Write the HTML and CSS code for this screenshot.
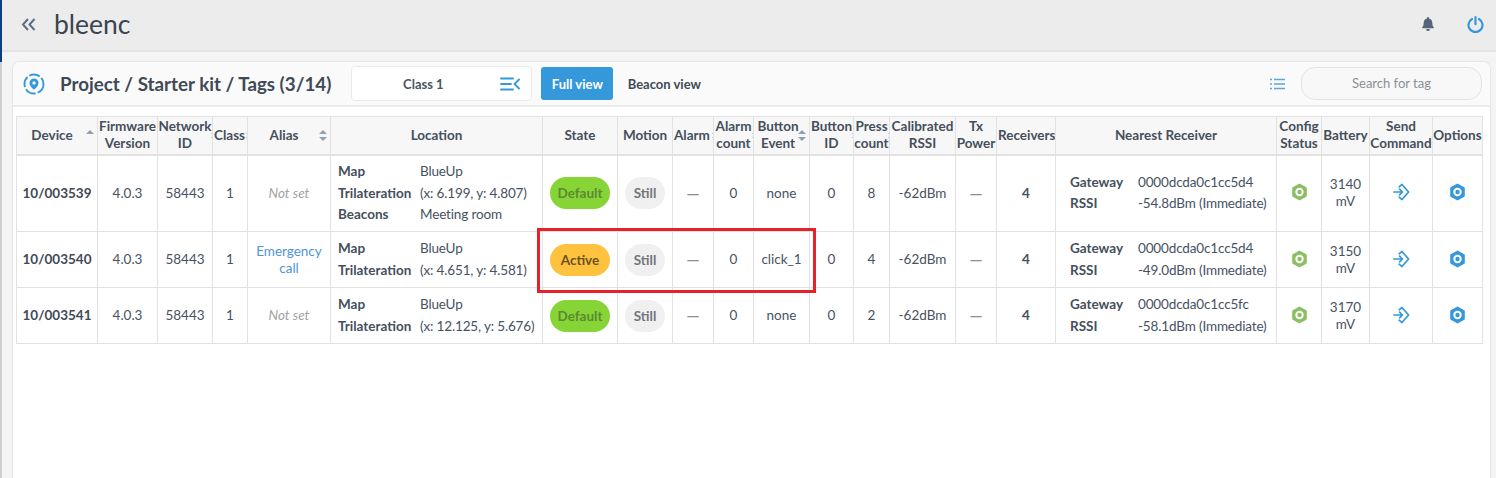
FILE: index.html
```html
<!DOCTYPE html>
<html lang="en">
<head>
<meta charset="utf-8">
<title>bleenc</title>
<link rel="stylesheet" href="styles.css">
</head>
<body>
<svg class="defs" width="0" height="0" aria-hidden="true">
  <symbol id="hex" viewBox="0 0 16 18"><path fill-rule="evenodd" d="M8 .4 14.800 4.300a1 1 0 0 1 .5.9v7.600a1 1 0 0 1-.5.9L8 17.600 1.200 13.700a1 1 0 0 1-.5-.9V5.200a1 1 0 0 1 .5-.9ZM8 4.800a4.200 4.200 0 1 0 0 8.400 4.200 4.200 0 0 0 0-8.400Z"/><circle cx="8" cy="9" r="2.200"/></symbol>
  <symbol id="send" viewBox="0 0 18 18"><path fill="none" stroke="currentColor" stroke-width="1.800" stroke-linecap="round" stroke-linejoin="round" d="M1 9h9M7 6l3 3-3 3M6.500 3.500 9.500 1l7 8-7 8-3-2.500"/></symbol>
</svg>
<div class="rail"><div class="rail-top"></div><div class="rail-bottom"></div></div>
<div class="page">
  <header class="topbar">
    <svg class="collapse" width="15" height="13" viewBox="0 0 15 13"><path fill="none" stroke="#5f6f82" stroke-width="2" d="M7 1 2 6.500 7 12M13.500 1l-5 5.500 5 5.500"/></svg>
    <span class="brand">bleenc</span>
    <span class="spacer"></span>
    <svg class="bell" width="12" height="14" viewBox="0 0 12 14"><path fill="#56657a" d="M6 0a1 1 0 0 1 1 1v.6c2 .4 3.300 2.100 3.300 4.100 0 2.700.7 3.700 1.400 4.500.3.400.1 1-.5 1H.8c-.6 0-.8-.6-.5-1C1 9.400 1.700 8.400 1.700 5.700c0-2 1.300-3.700 3.300-4.100V1a1 1 0 0 1 1-1ZM4.400 12h3.200A1.600 1.600 0 0 1 6 14a1.600 1.600 0 0 1-1.600-2Z"/></svg>
    <svg class="power" width="17" height="17" viewBox="0 0 17 17"><path fill="none" stroke="#3498db" stroke-width="2.200" stroke-linecap="round" d="M5 3a7 7 0 1 0 7 0M8.500 1.200v7"/></svg>
  </header>
  <main class="card">
    <div class="card-head">
      <svg class="pin" width="22" height="22" viewBox="0 0 22 22"><circle cx="11" cy="11" r="9.500" fill="none" stroke="#3498db" stroke-width="1.900" stroke-dasharray="11 2.200"/><path fill="#3498db" fill-rule="evenodd" d="M11 5.500a4.500 4.500 0 0 1 4.500 4.500c0 2.800-3 5.500-4.500 6.800C9.500 15.500 6.500 12.800 6.500 10A4.500 4.500 0 0 1 11 5.500Zm0 2.800a1.700 1.700 0 1 0 0 3.400 1.700 1.700 0 0 0 0-3.400Z"/></svg>
      <h1 class="title">Project / Starter kit / Tags (3/14)</h1>
      <div class="select">
        <span class="select-label">Class 1</span>
        <svg width="20" height="14" viewBox="0 0 20 14"><path fill="none" stroke="#3498db" stroke-width="1.800" stroke-linecap="round" d="M1 1.500h12M1 7h10M1 12.500h12M19 2.500 14.500 7l4.500 4.500"/></svg>
      </div>
      <button class="btn btn-primary">Full view</button>
      <button class="btn btn-plain">Beacon view</button>
      <span class="spacer"></span>
      <svg class="list" width="15" height="12" viewBox="0 0 15 12"><path fill="none" stroke="#5aa5da" stroke-width="1.600" d="M4 1.500h11M4 6h11M4 10.500h11M0 1.500h2M0 6h2M0 10.500h2"/></svg>
      <div class="search">Search for tag</div>
    </div>
    <div class="table-wrap">
      <table class="tags">
        <thead>
          <tr>
            <th class="pad-l">Device<i class="sort up"></i></th>
            <th>Firmware<br>Version</th>
            <th>Network<br>ID<i class="sort clip"></i></th>
            <th class="left">Class<i class="sort clip"></i></th>
            <th class="pad-l">Alias<i class="sort"></i></th>
            <th>Location</th>
            <th>State</th>
            <th>Motion</th>
            <th class="left">Alarm<i class="sort clip"></i></th>
            <th>Alarm<br>count<i class="sort clip"></i></th>
            <th class="pad-s">Button<br>Event<i class="sort"></i></th>
            <th>Button<br>ID<i class="sort clip"></i></th>
            <th>Press<br>count<i class="sort clip"></i></th>
            <th>Calibrated<br>RSSI</th>
            <th>Tx<br>Power</th>
            <th class="left">Receivers<i class="sort clip"></i></th>
            <th>Nearest Receiver</th>
            <th>Config<br>Status</th>
            <th>Battery</th>
            <th>Send<br>Command</th>
            <th>Options</th>
          </tr>
        </thead>
        <tbody>
          <tr class="r1">
            <td class="strong">10/003539</td><td>4.0.3</td><td>58443</td><td>1</td>
            <td class="muted">Not set</td>
            <td class="info"><dl class="kv kv-loc"><dt>Map</dt><dd>BlueUp</dd><dt>Trilateration</dt><dd>(x: 6.199, y: 4.807)</dd><dt>Beacons</dt><dd>Meeting room</dd></dl></td>
            <td><span class="pill green">Default</span></td><td><span class="pill grey">Still</span></td>
            <td class="dash">—</td><td>0</td><td>none</td><td>0</td><td>8</td><td>-62dBm</td><td class="dash">—</td><td class="semi">4</td>
            <td class="info"><dl class="kv kv-near"><dt>Gateway</dt><dd>0000dcda0c1cc5d4</dd><dt>RSSI</dt><dd>-54.8dBm (Immediate)</dd></dl></td>
            <td><svg class="ic ok"><use href="#hex"/></svg></td><td>3140<br>mV</td>
            <td><svg class="ic act"><use href="#send"/></svg></td><td><svg class="ic act"><use href="#hex"/></svg></td>
          </tr>
          <tr class="r2">
            <td class="strong">10/003540</td><td>4.0.3</td><td>58443</td><td>1</td>
            <td class="link">Emergency<br>call</td>
            <td class="info"><dl class="kv kv-loc"><dt>Map</dt><dd>BlueUp</dd><dt>Trilateration</dt><dd>(x: 4.651, y: 4.581)</dd></dl></td>
            <td><span class="pill amber">Active</span></td><td><span class="pill grey">Still</span></td>
            <td class="dash">—</td><td>0</td><td>click_1</td><td>0</td><td>4</td><td>-62dBm</td><td class="dash">—</td><td class="semi">4</td>
            <td class="info"><dl class="kv kv-near"><dt>Gateway</dt><dd>0000dcda0c1cc5d4</dd><dt>RSSI</dt><dd>-49.0dBm (Immediate)</dd></dl></td>
            <td><svg class="ic ok"><use href="#hex"/></svg></td><td>3150<br>mV</td>
            <td><svg class="ic act"><use href="#send"/></svg></td><td><svg class="ic act"><use href="#hex"/></svg></td>
          </tr>
          <tr class="r3">
            <td class="strong">10/003541</td><td>4.0.3</td><td>58443</td><td>1</td>
            <td class="muted">Not set</td>
            <td class="info"><dl class="kv kv-loc"><dt>Map</dt><dd>BlueUp</dd><dt>Trilateration</dt><dd>(x: 12.125, y: 5.676)</dd></dl></td>
            <td><span class="pill green">Default</span></td><td><span class="pill grey">Still</span></td>
            <td class="dash">—</td><td>0</td><td>none</td><td>0</td><td>2</td><td>-62dBm</td><td class="dash">—</td><td class="semi">4</td>
            <td class="info"><dl class="kv kv-near"><dt>Gateway</dt><dd>0000dcda0c1cc5fc</dd><dt>RSSI</dt><dd>-58.1dBm (Immediate)</dd></dl></td>
            <td><svg class="ic ok"><use href="#hex"/></svg></td><td>3170<br>mV</td>
            <td><svg class="ic act"><use href="#send"/></svg></td><td><svg class="ic act"><use href="#hex"/></svg></td>
          </tr>
        </tbody>
      </table>
      <div class="highlight"></div>
    </div>
  </main>
</div>
</body>
</html>
```
FILE: styles.css
```css
* { box-sizing: border-box; }
html, body { height: 100%; }
body {
  margin: 0;
  display: flex;
  height: 478px;
  overflow: hidden;
  background: #f4f4f4;
  font-family: "Lato", "Open Sans", sans-serif;
  font-size: 13.5px;
  color: #465263;
}
.defs { position: absolute; }
.rail { width: 2px; flex: none; display: flex; flex-direction: column; }
.rail-top { height: 62px; background: #0f3d80; }
.rail-bottom { flex: 1; background: #cfcfcf; }
.page { flex: 1; min-width: 0; display: flex; flex-direction: column; }
.spacer { flex: 1; }

.topbar {
  height: 52px;
  flex: none;
  display: flex;
  align-items: center;
  background: #ececec;
  border-bottom: 2px solid #e4e4e4;
  padding: 0 12px 2px 19px;
}
.collapse { margin-right: 18px; }
.brand { font-size: 26.500px; color: #3b4450; line-height: 1; }
.bell { margin-right: 33px; }

.card {
  flex: 1;
  margin: 9px 5px 0 10px;
  background: #fff;
  border: 1px solid #e6e6e6;
  border-bottom: 0;
  border-radius: 8px 8px 0 0;
  overflow: hidden;
}
.card-head {
  height: 45px;
  display: flex;
  align-items: center;
  background: #fafafa;
  border-bottom: 2px solid #ececec;
  padding: 0 8px 0 10px;
}
.pin { margin-right: 15px; flex: none; }
.title { margin: 0 20px 0 0; font-size: 18.770px; font-weight: 700; color: #3f4a57; white-space: nowrap; }
.select {
  width: 181px;
  height: 35px;
  margin-right: 9px;
  display: flex;
  align-items: center;
  background: #fff;
  border: 1px solid #eaeaea;
  border-radius: 4px;
  padding: 0 11px 0 0;
}
.select-label { flex: 1; text-align: center; font-weight: 700; font-size: 13px; color: #4a5563; padding-right: 6px; }
.btn {
  height: 33px;
  border: 0;
  border-radius: 3px;
  font: 700 13px "Lato", "Open Sans", sans-serif;
  padding: 0;
}
.btn-primary { width: 72px; background: #3498db; color: #fff; }
.btn-plain { width: 102px; background: transparent; color: #3f4a57; }
.list { margin-right: 16px; }
.search {
  width: 181px;
  height: 33px;
  border: 1px solid #e2e2e2;
  border-radius: 14px;
  background: #f8f8f8;
  text-align: center;
  line-height: 31px;
  color: #8a8f96;
  font-size: 13px;
}

.table-wrap { position: relative; padding: 9px 0 0 3px; }
.tags {
  table-layout: fixed;
  width: 1466px;
  border-collapse: collapse;
  background: #fff;
}
.tags th, .tags td {
  border: 1px solid #e2e2e2;
  text-align: center;
  vertical-align: middle;
  padding: 0;
}
.tags th {
  position: relative;
  height: 38px;
  overflow: hidden;
  background: #f7f7f7;
  border-bottom-width: 2px;
  font-weight: 700;
  color: #454f5c;
  line-height: 17px;
  white-space: nowrap;
}
.tags th.left { text-align: left; padding-left: 1px; }
.tags th.pad-l { padding-right: 10px; }
.tags th.pad-s { padding-right: 7px; }
.tags th:nth-child(1) { width: 81px; }
.tags th:nth-child(2) { width: 60px; }
.tags th:nth-child(3) { width: 55px; }
.tags th:nth-child(4) { width: 35px; }
.tags th:nth-child(5) { width: 83px; }
.tags th:nth-child(6) { width: 212px; }
.tags th:nth-child(7) { width: 75px; }
.tags th:nth-child(8) { width: 55px; }
.tags th:nth-child(9) { width: 41px; }
.tags th:nth-child(10) { width: 40px; }
.tags th:nth-child(11) { width: 56px; }
.tags th:nth-child(12) { width: 44px; }
.tags th:nth-child(13) { width: 36px; }
.tags th:nth-child(14) { width: 66px; }
.tags th:nth-child(15) { width: 41px; }
.tags th:nth-child(16) { width: 59px; }
.tags th:nth-child(17) { width: 221px; }
.tags th:nth-child(18) { width: 45px; }
.tags th:nth-child(19) { width: 48px; }
.tags th:nth-child(20) { width: 63px; }
.tags th:nth-child(21) { width: 50px; }
.tags td { line-height: 17px; }
.r1 td { height: 77px; }
.r2 td { height: 56px; }
.r3 td { height: 56px; }

/* sort carets sit over the header cell's corner and get clipped like the original */
.sort {
  position: absolute;
  right: 3px;
  top: 50%;
  width: 8px;
  height: 11px;
  margin-top: -5px;
}
.sort::before, .sort::after {
  content: "";
  position: absolute;
  left: 0;
  border-left: 4px solid transparent;
  border-right: 4px solid transparent;
}
.sort::before { top: 0; border-bottom: 4.500px solid #8fa0b5; }
.sort::after { bottom: 0; border-top: 4.500px solid #8fa0b5; }
.sort.up::after { display: none; }
.sort.clip { right: -7px; }

.strong { font-weight: 700; color: #3f4955; }
.semi { font-weight: 700; color: #454f5c; }
.muted { font-style: italic; color: #a3a3a3; }
.link { color: #4f94d8; }
.tags td.dash { font-size: 17px; color: #8a8f96; }
.kv {
  margin: 0;
  display: grid;
  row-gap: 4px;
  text-align: left;
  line-height: 17.500px;
  white-space: nowrap;
}
.kv dt { font-weight: 700; color: #454f5c; }
.kv dd { margin: 0; letter-spacing: -0.15px; }
.kv-loc { grid-template-columns: 82px 1fr; padding-left: 7px; }
.kv-near { grid-template-columns: 68px 1fr; padding-left: 14px; }

.pill {
  display: inline-block;
  height: 32px;
  line-height: 32px;
  border-radius: 16px;
  font-weight: 700;
  text-align: center;
}
.green { width: 60px; background: #87d437; color: #5b8a2f; }
.amber { width: 60px; background: #ffc23e; color: #6a5220; }
.grey { width: 40px; background: #f0f0f0; color: #72767b; }

.ic { display: block; width: 17px; height: 18px; margin: -1px auto 1px; }
.ok { fill: #8cbf62; color: #8cbf62; }
.act { fill: #3498db; color: #3498db; }

.highlight {
  position: absolute;
  left: 524px;
  top: 121px;
  width: 279px;
  height: 65px;
  border: 3px solid #e8202a;
}
```
